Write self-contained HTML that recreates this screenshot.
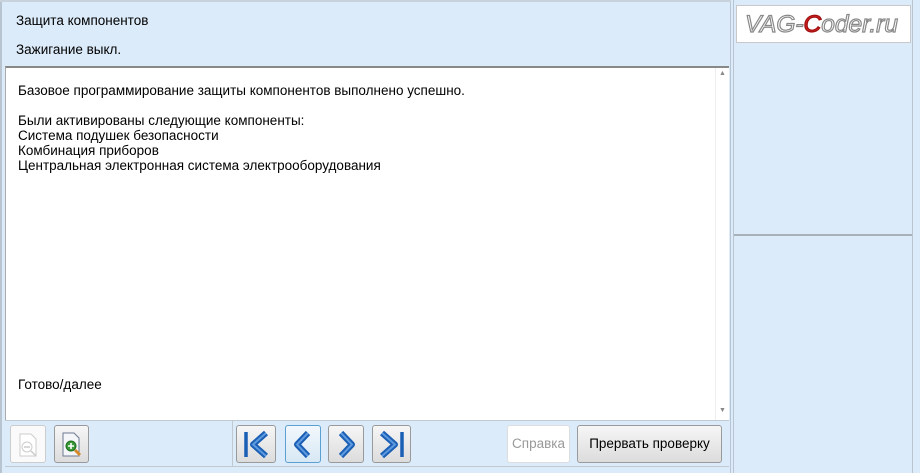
<!DOCTYPE html><html><head><meta charset="utf-8"><style>
body{margin:0;width:920px;height:473px;background:#dcebfa;font-family:"Liberation Sans",Arial,sans-serif;font-size:13.5px;color:#000;position:relative;overflow:hidden}
.a{position:absolute}
.btn{position:absolute;top:425px;height:38px;border:1px solid #9a9a9a;border-radius:3px;background:linear-gradient(#f6f6f6,#dcdcdc);box-sizing:border-box}
</style></head><body>
<div class="a" style="left:0;top:0;width:731px;height:473px;border-left:2px solid #b8c4d0;border-right:1px solid #b8c4d0;box-sizing:border-box"></div>
<div class="a" style="left:733px;top:0;width:180px;height:473px;border-left:1px solid #b8c4d0;border-right:1px solid #b8c4d0;box-sizing:border-box"></div>
<div class="a" style="left:0;top:0;width:731px;height:2px;background:#c8d2dc"></div>
<div class="a" style="left:16px;top:13px;white-space:nowrap">Защита компонентов</div>
<div class="a" style="left:16px;top:42px;white-space:nowrap">Зажигание выкл.</div>
<div class="a" style="left:5px;top:66px;width:724px;height:354px;background:#fff;border-top:2px solid #888;border-left:1px solid #aaa;box-sizing:border-box"></div>
<div class="a" style="left:715px;top:68px;width:13px;height:352px;background:#fff;border-left:1px solid #eee"></div>
<div class="a" style="left:719px;top:70px;font-size:7px;color:#888">▲</div>
<div class="a" style="left:719px;top:407px;font-size:7px;color:#888">▼</div>
<div class="a" style="left:18px;top:83px;line-height:15px;white-space:nowrap">Базовое программирование защиты компонентов выполнено успешно.<br><br>Были активированы следующие компоненты:<br>Система подушек безопасности<br>Комбинация приборов<br>Центральная электронная система электрооборудования</div>
<div class="a" style="left:18px;top:377px">Готово/далее</div>
<div class="a" style="left:5px;top:420px;width:724px;height:1px;background:#c0c8d0"></div>
<div class="a" style="left:5px;top:466px;width:724px;height:1px;background:#c0c8d0"></div>
<div class="a" style="left:232px;top:421px;width:1px;height:45px;background:#c0c8d0"></div>
<div class="btn" style="left:10px;width:36px;background:#fafafa;border-color:#ccc"><svg width="34" height="36"><path d="M9 8h11l5 5v17H9z" fill="#fff" stroke="#ccc"/><circle cx="16" cy="21" r="5" fill="none" stroke="#ccc"/><path d="M13 21h6M20 25l5 5" stroke="#ccc" stroke-width="1.5"/></svg></div>
<div class="btn" style="left:54px;width:35px"><svg width="33" height="36"><path d="M8 7h11l5 5v18H8z" fill="#f4f6fa" stroke="#6c7a90"/><circle cx="16" cy="20" r="5" fill="#3a9a3a" stroke="#1f6f1f"/><path d="M13 20h6M16 17v6" stroke="#fff" stroke-width="1.6"/><path d="M20 24l5 5" stroke="#d58a2a" stroke-width="3"/></svg></div>
<div class="btn" style="left:236px;width:40px"><svg width="38" height="36"><path d="M9 6v25" stroke="#1a5fb4" stroke-width="3.5"/><path d="M29 7L16 18.5 29 30" fill="none" stroke="#1a5fb4" stroke-width="6" stroke-linejoin="round"/><path d="M29 7L16 18.5 29 30" fill="none" stroke="#5d9ae0" stroke-width="2"/></svg></div>
<div class="btn" style="left:285px;width:36px;border-color:#5aa0d0;background:linear-gradient(#f2f8fd,#d8e8f4)"><svg width="34" height="36"><path d="M22 7L11 18.5 22 30" fill="none" stroke="#1a5fb4" stroke-width="6" stroke-linejoin="round"/><path d="M22 7L11 18.5 22 30" fill="none" stroke="#5d9ae0" stroke-width="2"/></svg></div>
<div class="btn" style="left:328px;width:36px"><svg width="34" height="36"><path d="M12 7l11 11.5L12 30" fill="none" stroke="#1a5fb4" stroke-width="6" stroke-linejoin="round"/><path d="M12 7l11 11.5L12 30" fill="none" stroke="#5d9ae0" stroke-width="2"/></svg></div>
<div class="btn" style="left:372px;width:39px"><svg width="37" height="36"><path d="M9 7l13 11.5L9 30" fill="none" stroke="#1a5fb4" stroke-width="6" stroke-linejoin="round"/><path d="M9 7l13 11.5L9 30" fill="none" stroke="#5d9ae0" stroke-width="2"/><path d="M29 6v25" stroke="#1a5fb4" stroke-width="3.5"/></svg></div>
<div class="btn" style="left:507px;width:63px;background:#fff;border-color:#ddd;color:#999;text-align:center;line-height:36px">Справка</div>
<div class="btn" style="left:577px;width:145px;text-align:center;line-height:36px">Прервать проверку</div>
<div class="a" style="left:736px;top:5px;width:175px;height:38px;background:#fff;border:1px solid #c8c8c8;box-sizing:border-box"></div>
<div class="a" style="left:745px;top:11px;font-size:24.5px;font-style:italic;color:#fff;-webkit-text-stroke:1.2px #888;white-space:nowrap">VAG-<span style="color:#d42020;-webkit-text-stroke:1.2px #a01010">C</span>oder.ru</div>
<div class="a" style="left:734px;top:234px;width:178px;height:2px;background:#a8b0b8"></div>
</body></html>
